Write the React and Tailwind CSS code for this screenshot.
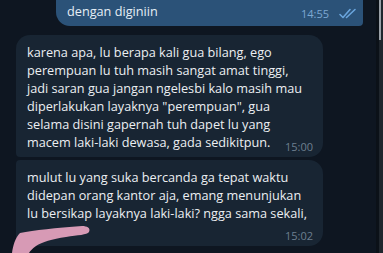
import React from 'react';

const font = { fontFamily: '"Open Sans", "Noto Sans", sans-serif' };

const DoubleCheck = () => (
  <svg width="18" height="11" viewBox="0 0 18 11" fill="none" stroke="#6aa5dd" strokeWidth="1.6" strokeLinecap="round" strokeLinejoin="round">
    <path d="M1 6.5l3 3L11 1.5" />
    <path d="M7.5 9.5L16 1.5" />
  </svg>
);

// pink redaction scribble over the bottom-left corner
const Scribble = () => (
  <svg className="absolute left-0 bottom-0" width="100" height="30" viewBox="0 223 100 30">
    <path
      d="M12 253 C13 246 15 238 20 233 C34 230 56 228 82 226 C87 226 91 228 89 232 C87 235 78 235 66 237 C52 239 42 242 36 246 C32 249 30 251 29 253 Z"
      fill="#d79ab5"
    />
  </svg>
);

export default function App() {
  return (
    <div className="w-[383px] h-[253px] overflow-hidden bg-[#0e1621] flex text-[#eceff2]" style={font}>
      <div className="flex-1 flex flex-col relative">
        {/* outgoing */}
        <div className="ml-[56px] w-[307px] h-[26px] bg-[#2b5278] rounded-bl-[14px] rounded-br-[4px] flex items-end justify-between pl-[11px] pr-[6px] pb-[5px]">
          <span className="text-[12.7px] leading-[18px] text-[#e6eef6] mb-[1px]">dengan diginiin</span>
          <div className="flex items-center gap-[10px]">
            <span className="text-[11px] leading-[15px] text-[#7da8d3]">14:55</span>
            <DoubleCheck />
          </div>
        </div>

        {/* incoming 1 */}
        <div className="mt-[9px] ml-[16px] w-[307px] bg-[#182533] rounded-t-[14px] rounded-br-[14px] rounded-bl-[4px] pl-[11px] pr-[8px] pt-[8px] pb-[6px] relative">
          <p className="text-[12.7px] leading-[18px] whitespace-nowrap">
            karena apa, lu berapa kali gua bilang, ego<br />
            perempuan lu tuh masih sangat amat tinggi,<br />
            jadi saran gua jangan ngelesbi kalo masih mau<br />
            diperlakukan layaknya "perempuan", gua<br />
            selama disini gapernah tuh dapet lu yang<br />
            macem laki-laki dewasa, gada sedikitpun.
          </p>
          <span className="absolute right-[10px] bottom-[3px] text-[11px] leading-[15px] text-[#6d7f8f]">15:00</span>
        </div>

        {/* incoming 2 */}
        <div className="mt-[3px] ml-[16px] w-[307px] bg-[#182533] rounded-tr-[14px] rounded-br-[14px] rounded-tl-[4px] rounded-bl-[4px] pl-[11px] pr-[10px] pt-[8px] pb-[3px] flex flex-col">
          <p className="text-[12.7px] leading-[18px] whitespace-nowrap">
            mulut lu yang suka bercanda ga tepat waktu<br />
            didepan orang kantor aja, emang menunjukan<br />
            lu bersikap layaknya laki-laki? ngga sama sekali,
          </p>
          <span className="self-end mt-[6px] text-[11px] leading-[15px] text-[#6d7f8f]">15:02</span>
        </div>

        <Scribble />
      </div>

      {/* right edge strip */}
      <div className="w-[7px] bg-[#1f262d] flex">
        <div className="w-[3px] bg-[#0b1118]" />
        <div className="w-[2px] h-[40px] bg-[#9aa1a8]" />
      </div>
    </div>
  );
}
